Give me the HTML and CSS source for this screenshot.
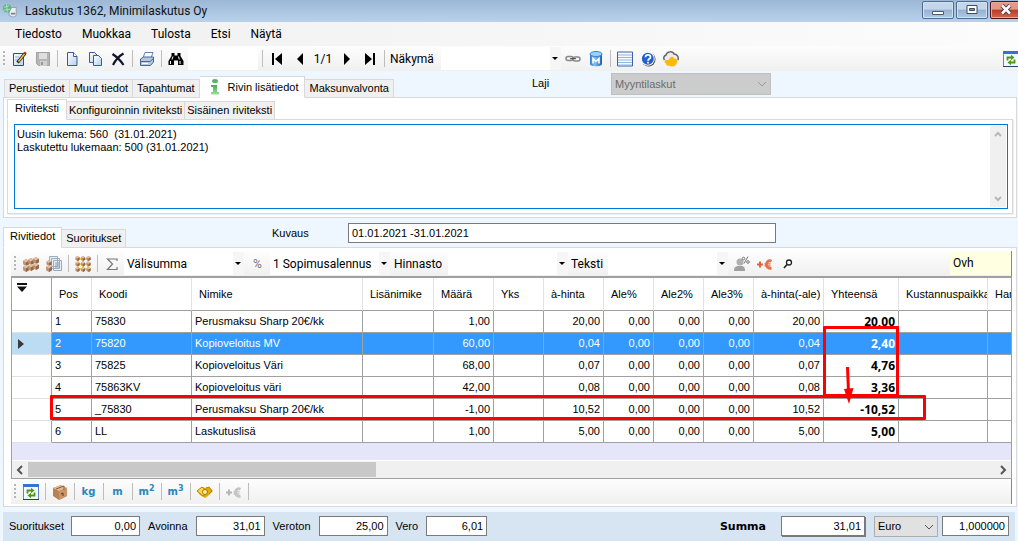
FILE: index.html
```html
<!DOCTYPE html>
<html lang="fi">
<head>
<meta charset="utf-8">
<title>Laskutus 1362, Minimilaskutus Oy</title>
<link rel="stylesheet" href="styles.css">
</head>
<body>
<svg class="defs" aria-hidden="true">
  <defs>
    <linearGradient id="pg" x1="0" y1="0" x2="1" y2="1"><stop offset="0" stop-color="#fff"/><stop offset="1" stop-color="#b5d0ee"/></linearGradient>
    <linearGradient id="db" x1="0" y1="0" x2="1" y2="0"><stop offset="0" stop-color="#2f78d0"/><stop offset=".4" stop-color="#7fc0f5"/><stop offset="1" stop-color="#1e5cb8"/></linearGradient>
    <linearGradient id="gr" x1="0" y1="0" x2="0" y2="1"><stop offset="0" stop-color="#4aa95c"/><stop offset="1" stop-color="#9be09a"/></linearGradient>
    <symbol id="i-refresh" viewBox="0 0 16 16">
      <path d="M.5.5h15v15H.5z" fill="#f4f8ff" stroke="#5f86c8"/><path d="M0 0h16v3H0z" fill="#3a6fd8"/><path d="M0 15h16v1H0z" fill="#26406e"/>
      <path d="M4.500 9.500V6.500H8M11.500 8.500v3H8" fill="none" stroke="#4f9a10" stroke-width="1.800"/><path d="M8 3.800l3.500 2.700L8 9.200zM8 8.800v5.400l-3.500-2.700z" fill="#4f9a10"/>
    </symbol>
    <symbol id="brick" viewBox="0 0 5 6"><path d="M0 1.500 2.500 0 5 1.500v3L2.500 6 0 4.500z" fill="#bd9070"/><path d="M0 1.500 2.500 0 5 1.500 2.500 3z" fill="#e3bfa4"/><path d="M2.500 3v3L5 4.500v-3z" fill="#93664a"/></symbol>
  </defs>
</svg>
<div class="window">
  <header class="titlebar">
    <svg class="logo" viewBox="0 0 18 18"><path d="M8 5h8v9l-3 2-5-2z" fill="#e9eef2" stroke="#8d9aa5"/><path d="M10 12h5" stroke="#7b8790" stroke-width="2"/><path d="M1 4l3-3 5 1 2 4-3 5-5-1-2-3z" fill="#5fb486"/><path d="M2 5l6-2M2 8l7-1M5 1l1 9" stroke="#b7e3c9"/></svg>
    <h1 class="title">Laskutus 1362, Minimilaskutus Oy</h1>
    <div class="winbtns">
      <button class="winbtn" aria-label="Pienennä"><svg viewBox="0 0 12 12"><path d="M.5 7.500h11v3H.5z" fill="#fff" stroke="#4c5a6c"/></svg></button>
      <button class="winbtn" aria-label="Suurenna"><svg viewBox="0 0 12 12"><path d="M1 1.500h10v8H1z" fill="#fff" stroke="#3f4d60"/><path d="M3.500 4.500h5v2h-5z" fill="#7d98bb" stroke="#3f4d60"/></svg></button>
      <button class="winbtn close" aria-label="Sulje"><svg viewBox="0 0 12 12"><path d="M2 1.500l8 8M10 1.500l-8 8" stroke="#463c46" stroke-width="4.500"/><path d="M2 1.500l8 8M10 1.500l-8 8" stroke="#fff" stroke-width="2.500"/></svg></button>
    </div>
  </header>
  <nav class="menubar">
    <button>Tiedosto</button><button>Muokkaa</button><button>Tulosta</button><button>Etsi</button><button>Näytä</button>
  </nav>
  <div class="toolbar main-tools">
    <i class="grip"></i>
    <button class="tb" aria-label="Muokkaa riviä"><svg viewBox="0 0 16 16"><path d="M1.500 2.500h10v12h-10z" fill="url(#pg)" stroke="#2c4f84"/><path d="M3 6h4M3 9h3" stroke="#8fb0d8"/><path d="M5.500 11.500l7.500-9" stroke="#222" stroke-width="3"/><path d="M6.500 10.500l6-7.500" stroke="#f5c43a" stroke-width="1.500"/><path d="M12.500 3l1.300-1.700" stroke="#a33" stroke-width="2.500"/></svg></button>
    <button class="tb" aria-label="Tallenna"><svg viewBox="0 0 16 16"><path d="M1.500 1.500h13v13h-11l-2-2z" fill="#b5b5b5" stroke="#a0a0a0"/><path d="M4 2h8v6H4z" fill="#dedede"/><path d="M5 10h7v5H5z" fill="#d0d0d0"/><path d="M6 11h2v3H6z" fill="#999"/></svg></button>
    <i class="sep"></i>
    <button class="tb" aria-label="Uusi"><svg viewBox="0 0 16 16"><path d="M3.500 1.500h6l3.500 4v9H3.500z" fill="url(#pg)" stroke="#3a5c95"/><path d="M9.500 1.500V5.500H13" fill="#fff" stroke="#3a5c95"/></svg></button>
    <button class="tb" aria-label="Kopioi"><svg viewBox="0 0 16 16"><path d="M2.500 1.500h5l3 3v7h-8z" fill="url(#pg)" stroke="#3a5c95"/><path d="M6.500 4.500h5l3 3v7h-8z" fill="url(#pg)" stroke="#3a5c95"/></svg></button>
    <button class="tb" aria-label="Poista"><svg viewBox="0 0 16 16"><path d="M2.500 3C7 6 11 10 13.500 14M13.500 2.500C9 5 5 10 3 14" fill="none" stroke="#13132c" stroke-width="2.200"/></svg></button>
    <i class="sep"></i>
    <button class="tb" aria-label="Tulosta"><svg viewBox="0 0 16 16"><path d="M6 1.500h8L12 7H4z" fill="#fff" stroke="#6282ad"/><path d="M1.500 8l3-2h10v5l-3 3.500h-10z" fill="#b6c8df" stroke="#4a6790"/><path d="M2 10.500h9l3.500-3" fill="none" stroke="#4a6790"/><path d="M3 12.500h6" stroke="#fff"/></svg></button>
    <i class="sep"></i>
    <button class="tb" aria-label="Etsi"><svg viewBox="0 0 16 16"><path d="M3.500 2h3v2.500h3V2h3v3l3 5v4h-5.500V9.500H6V14H.5v-4l3-5z" fill="#000"/><path d="M2.500 10v3M5 5.500L4 8.500M12 10v3M10.500 5.500l.8 3" stroke="#fff"/></svg></button>
    <input class="quick" aria-label="Hakuteksti">
    <i class="sep"></i>
    <button class="tb" aria-label="Ensimmäinen"><svg viewBox="0 0 16 16"><path d="M3 2h2v12H3zM13 2v12L6 8z" fill="#000"/></svg></button>
    <button class="tb" aria-label="Edellinen"><svg viewBox="0 0 16 16"><path d="M11 2v12L5 8z" fill="#000"/></svg></button>
    <span class="pager">1/1</span>
    <button class="tb" aria-label="Seuraava"><svg viewBox="0 0 16 16"><path d="M5 2v12l6-6z" fill="#000"/></svg></button>
    <button class="tb" aria-label="Viimeinen"><svg viewBox="0 0 16 16"><path d="M3 2v12l7-6zM11 2h2v12h-2z" fill="#000"/></svg></button>
    <i class="sep"></i>
    <label class="tlabel view-label" for="view">Näkymä</label>
    <span class="combo"><select id="view"><option></option></select></span>
    <button class="tb" aria-label="Linkki"><svg viewBox="0 0 16 16"><rect x="1" y="5.500" width="7" height="4" rx="2" fill="none" stroke="#888" stroke-width="1.500"/><rect x="8" y="6" width="7" height="4" rx="2" fill="none" stroke="#888" stroke-width="1.500"/><path d="M5 7.700h6" stroke="#444"/></svg></button>
    <button class="tb" aria-label="Tietokanta"><svg viewBox="0 0 16 16"><path d="M2 3v10c0 3 12 3 12 0V3z" fill="url(#db)"/><ellipse cx="8" cy="3" rx="6" ry="2.500" fill="#9ad4fa" stroke="#3c82cf"/><path d="M5 12.500V7.500l3 3 3-3v5" fill="none" stroke="#fff" stroke-width="1.600"/></svg></button>
    <i class="sep"></i>
    <button class="tb" aria-label="Luettelo"><svg viewBox="0 0 16 16"><path d="M.5 1h15v14H.5z" fill="#f8fbff" stroke="#3c63a5"/><path d="M1 4h14M1 6.500h14M1 9h14M1 11.500h14M1 14h14" stroke="#8fb4e6"/></svg></button>
    <button class="tb" aria-label="Ohje"><svg viewBox="0 0 16 16"><circle cx="8.500" cy="8.500" r="7" fill="#444"/><circle cx="7.800" cy="7.800" r="7" fill="#fff"/><circle cx="7.800" cy="7.800" r="6" fill="#2460cc"/><path d="M5.500 6.200c0-3 5-3 5 0 0 1.600-2.500 1.600-2.500 3.500M8 10.800v1.700" fill="none" stroke="#fff" stroke-width="1.700"/></svg></button>
    <button class="tb" aria-label="Pilvi"><svg viewBox="0 0 16 16"><path d="M1.500 9C0 7 1 5 3 4c1-4 7-4 8-1 3 0 5 3 4 6" fill="#ececec" stroke="#666" stroke-width="1.500"/><path d="M2 9.500c1-1 3 0 4-1 1-3 4-4 5-1 3 0 4 2 3 4-1 4-5 5-8 3-2 1-3-1-3-2-1 0-2-2-1-3z" fill="#fbb90c"/></svg></button>
    <button class="tb edge" aria-label="Päivitä"><svg><use href="#i-refresh"/></svg></button>
  </div>

  <main class="body">
    <div class="tabrow">
      <div class="tabs top-tabs" role="tablist">
        <button class="tab" role="tab">Perustiedot</button><button class="tab" role="tab">Muut tiedot</button><button class="tab" role="tab">Tapahtumat</button><button class="tab active with-icon" role="tab" aria-selected="true"><svg viewBox="0 0 10 16"><ellipse cx="5" cy="2" rx="3" ry="2" fill="#58b368"/><path d="M1 6h6v7h2v2.500H1V13h2V8H1z" fill="url(#gr)"/></svg>Rivin lisätiedot</button><button class="tab" role="tab">Maksunvalvonta</button>
      </div>
      <label class="kind-label" for="kind">Laji</label>
      <span class="winselect kind"><select id="kind" disabled><option>Myyntilaskut</option></select><svg viewBox="0 0 10 6"><path d="M1 1l4 4 4-4"/></svg></span>
    </div>
    <section class="panel outer">
      <div class="tabs inner-tabs" role="tablist">
        <button class="tab active" role="tab" aria-selected="true">Riviteksti</button><button class="tab" role="tab">Konfiguroinnin riviteksti</button><button class="tab" role="tab">Sisäinen riviteksti</button>
      </div>
      <div class="panel inner">
        <div class="memo">
          <textarea aria-label="Riviteksti">Uusin lukema: 560  (31.01.2021)
Laskutettu lukemaan: 500 (31.01.2021)</textarea>
          <div class="vscroll"><svg viewBox="0 0 8 6"><path d="M1 5l3-3 3 3"/></svg><svg viewBox="0 0 8 6"><path d="M1 1l3 3 3-3"/></svg></div>
        </div>
      </div>
    </section>

    <div class="tabrow row-tabs">
      <div class="tabs" role="tablist">
        <button class="tab active" role="tab" aria-selected="true">Rivitiedot</button><button class="tab" role="tab">Suoritukset</button>
      </div>
      <label class="desc-label" for="desc">Kuvaus</label>
      <input class="field desc" id="desc" value="01.01.2021 -31.01.2021">
    </div>
    <section class="panel rows">
      <div class="toolbar row-tools">
        <i class="grip"></i>
        <button class="tb" aria-label="Tuotteet"><svg viewBox="0 0 16 16"><use href="#brick" x="0" y="3" width="6" height="7"/><use href="#brick" x="5" y="2" width="6" height="7"/><use href="#brick" x="10" y="1" width="6" height="7"/><use href="#brick" x="0" y="9" width="6" height="7"/><use href="#brick" x="5" y="8" width="6" height="7"/><use href="#brick" x="10" y="7" width="6" height="7"/></svg></button>
        <button class="tb" aria-label="Rakenne"><svg viewBox="0 0 16 16"><path d="M3.500.5h8v10h-8zM5.500 2.500h8v10h-8zM7.500 4.500h8v10h-8z" fill="#e8eef5" stroke="#9aacc0"/><path d="M9 7h5M9 9h5M9 11h5" stroke="#8aa0bb"/><use href="#brick" x="0" y="4" width="6" height="6"/><use href="#brick" x="0" y="9" width="6" height="7"/></svg></button>
        <i class="sep"></i>
        <button class="tb" aria-label="Ryhmät"><svg viewBox="0 0 16 16"><path d="M3 3h10v10H3zM3 8h10M8 3v10" fill="none" stroke="#f0c420" stroke-width="1.500"/><use href="#brick" x="0" y="0" width="5" height="5"/><use href="#brick" x="5.500" y="0" width="5" height="5"/><use href="#brick" x="11" y="0" width="5" height="5"/><use href="#brick" x="0" y="5.500" width="5" height="5"/><use href="#brick" x="5.500" y="5.500" width="5" height="5"/><use href="#brick" x="11" y="5.500" width="5" height="5"/><use href="#brick" x="0" y="11" width="5" height="5"/><use href="#brick" x="5.500" y="11" width="5" height="5"/><use href="#brick" x="11" y="11" width="5" height="5"/></svg></button>
        <i class="sep"></i>
        <button class="tb" aria-label="Summa"><svg viewBox="0 0 16 16"><path d="M13 5V3H3.500l5 5-5 5.500H13V11" fill="none" stroke="#777" stroke-width="1.200"/></svg></button>
        <span class="combo"><select aria-label="Summatyyppi"><option>Välisumma</option></select></span>
        <button class="tb pct" aria-label="Alennusprosentti">%</button>
        <span class="combo"><select aria-label="Alennus"><option>1 Sopimusalennus</option></select></span>
        <label class="tlabel price-label" for="pricelist">Hinnasto</label>
        <span class="combo"><select id="pricelist"><option></option></select></span>
        <label class="tlabel text-label" for="text">Teksti</label>
        <span class="combo"><select id="text"><option></option></select></span>
        <button class="tb" aria-label="Asiakasalennus"><svg viewBox="0 0 16 16"><circle cx="6" cy="6" r="3.500" fill="#b0b0b0"/><path d="M0 15c0-5 3-5 6-5s5 0 5 5z" fill="#a0a0a0"/><circle cx="9.500" cy="2.500" r="1.300" fill="none" stroke="#777"/><circle cx="14" cy="6" r="1.300" fill="none" stroke="#777"/><path d="M10 7.500l4-7" stroke="#777"/></svg></button>
        <button class="tb" aria-label="Lisää hinta"><svg viewBox="0 0 16 16"><path d="M0 8.500h6M3 5.500v6" stroke="#dd6240" stroke-width="2"/><path d="M14.500 5.200c-6-3-7.500 8.600 0 7" fill="none" stroke="#e2714e" stroke-width="2.800"/><path d="M7.500 7.800h6M7.500 9.800h6" stroke="#e2714e" stroke-width="1.200"/></svg></button>
        <button class="tb" aria-label="Hae"><svg viewBox="0 0 16 16"><circle cx="9" cy="6.500" r="2.500" fill="#fff" stroke="#222" stroke-width="1.300"/><path d="M7 8.500L4 12" stroke="#222" stroke-width="1.600"/></svg></button>
        <span class="ovh">Ovh</span>
      </div>

      <div class="grid">
        <div class="grid-clip">
        <table>
          <colgroup><col class="w40"><col class="w40"><col class="w100"><col class="w171"><col class="w71"><col class="w60"><col class="w50"><col class="w60"><col class="w50"><col class="w50"><col class="w50"><col class="w70"><col class="w75"><col class="w89"><col class="w71"></colgroup>
          <thead><tr><th class="pick"><svg viewBox="0 0 10 9"><path d="M0 0h10v2H0zM0 3.500h10L5 9z" fill="#111"/></svg></th><th>Pos</th><th>Koodi</th><th>Nimike</th><th>Lisänimike</th><th>Määrä</th><th>Yks</th><th>à-hinta</th><th>Ale%</th><th>Ale2%</th><th>Ale3%</th><th>à-hinta(-ale)</th><th>Yhteensä</th><th>Kustannuspaikka</th><th>Hankinta</th></tr></thead>
          <tbody>
            <tr><td></td><td>1</td><td>75830</td><td>Perusmaksu Sharp 20€/kk</td><td></td><td class="n">1,00</td><td></td><td class="n">20,00</td><td class="n">0,00</td><td class="n">0,00</td><td class="n">0,00</td><td class="n">20,00</td><td class="n total">20,00</td><td></td><td></td></tr>
            <tr class="sel"><td class="cur"><svg viewBox="0 0 6 10"><path d="M0 0l6 5-6 5z" fill="#3a3a3a"/></svg></td><td>2</td><td>75820</td><td>Kopioveloitus MV</td><td></td><td class="n">60,00</td><td></td><td class="n">0,04</td><td class="n">0,00</td><td class="n">0,00</td><td class="n">0,00</td><td class="n">0,04</td><td class="n total">2,40</td><td></td><td></td></tr>
            <tr><td></td><td>3</td><td>75825</td><td>Kopioveloitus Väri</td><td></td><td class="n">68,00</td><td></td><td class="n">0,07</td><td class="n">0,00</td><td class="n">0,00</td><td class="n">0,00</td><td class="n">0,07</td><td class="n total">4,76</td><td></td><td></td></tr>
            <tr><td></td><td>4</td><td>75863KV</td><td>Kopioveloitus väri</td><td></td><td class="n">42,00</td><td></td><td class="n">0,08</td><td class="n">0,00</td><td class="n">0,00</td><td class="n">0,00</td><td class="n">0,08</td><td class="n total">3,36</td><td></td><td></td></tr>
            <tr><td></td><td>5</td><td>_75830</td><td>Perusmaksu Sharp 20€/kk</td><td></td><td class="n">-1,00</td><td></td><td class="n">10,52</td><td class="n">0,00</td><td class="n">0,00</td><td class="n">0,00</td><td class="n">10,52</td><td class="n total">-10,52</td><td></td><td></td></tr>
            <tr><td></td><td>6</td><td>LL</td><td>Laskutuslisä</td><td></td><td class="n">1,00</td><td></td><td class="n">5,00</td><td class="n">0,00</td><td class="n">0,00</td><td class="n">0,00</td><td class="n">5,00</td><td class="n total">5,00</td><td></td><td></td></tr>
          </tbody>
        </table>
        </div>
        <div class="hscroll"><svg viewBox="0 0 8 10"><path d="M6 1L2 5l4 4"/></svg><div class="track"><div class="thumb"></div></div><svg viewBox="0 0 8 10"><path d="M2 1l4 4-4 4"/></svg></div>
        <div class="mark mark-sum"></div>
        <div class="mark mark-row"></div>
        <svg class="arrow" viewBox="0 0 12 38"><path d="M4.500 1L5.500 26" stroke="#f00" stroke-width="3"/><path d="M1 23l9.500-1L6 38z" fill="#f00"/></svg>
      </div>

      <div class="toolbar unit-tools">
        <i class="grip"></i>
        <button class="tb" aria-label="Päivitä rivit"><svg><use href="#i-refresh"/></svg></button><i class="sep"></i>
        <button class="tb" aria-label="Pakkaus"><svg viewBox="0 0 16 16"><path d="M1 4l8-3 6 3v8l-8 4-6-4z" fill="#b98055"/><path d="M1 4l8-3 6 3-8 3z" fill="#e2b98e"/><path d="M7 7v9l8-4V4z" fill="#c99568"/><path d="M4 5l8-3v4" fill="none" stroke="#8a5a38"/><path d="M9 10l2-1v3" stroke="#5c3a22" fill="none"/></svg></button><i class="sep"></i>
        <button class="tb unit"><span>kg</span></button><i class="sep"></i>
        <button class="tb unit"><span>m</span></button><i class="sep"></i>
        <button class="tb unit"><span>m<sup>2</sup></span></button><i class="sep"></i>
        <button class="tb unit"><span>m<sup>3</sup></span></button><i class="sep"></i>
        <button class="tb" aria-label="Rahat"><svg viewBox="0 0 16 16"><path d="M0 7l5-4 4 1 3-1 4 4-5 5-3 2-5-3z" fill="#e2a90c"/><path d="M0 7l5-4 6 5-5 4z" fill="#ffd84a" stroke="#b78203"/><circle cx="8" cy="8" r="2.500" fill="#fff1a8" stroke="#a77500"/><path d="M9 4l3-1 3 4-3 3" fill="none" stroke="#b78203"/></svg></button><i class="sep"></i>
        <button class="tb" aria-label="Lisää euro" disabled><svg viewBox="0 0 16 16"><path d="M0 8.500h6M3 5.500v6" stroke="#b5b5b5" stroke-width="2"/><path d="M14.500 5.200c-6-3-7.500 8.600 0 7" fill="none" stroke="#c4c4c4" stroke-width="2.800"/><path d="M7.500 7.800h6M7.500 9.800h6" stroke="#c4c4c4" stroke-width="1.200"/></svg></button><i class="sep"></i>
      </div>
    </section>
  </main>

  <footer class="totals">
    <label for="paid">Suoritukset</label><input class="field w-69" id="paid" value="0,00">
    <label for="open">Avoinna</label><input class="field w-69" id="open" value="31,01">
    <label for="net">Veroton</label><input class="field w-69" id="net" value="25,00">
    <label for="tax">Vero</label><input class="field w-61" id="tax" value="6,01">
    <label class="sum" for="sum">Summa</label><input class="field raised" id="sum" value="31,01">
    <span class="winselect cur-select"><select aria-label="Valuutta"><option>Euro</option></select><svg viewBox="0 0 10 6"><path d="M1 1l4 4 4-4"/></svg></span>
    <input class="field w-67" aria-label="Kurssi" value="1,000000">
  </footer>
</div>
</body>
</html>
```
FILE: styles.css
```css
* { box-sizing: border-box; }
body { margin: 0; font: 11px/13px "Liberation Sans", Arial, sans-serif; color: #000; background: #eef7ff; }
button, input, select, textarea { font: inherit; color: inherit; margin: 0; padding: 0; border: 0; background: none; border-radius: 0; outline: 0; }
select { appearance: none; }
.defs { position: absolute; width: 0; height: 0; }
.window { min-height: 100vh; display: flex; flex-direction: column; overflow: hidden; }

.titlebar { height: 22px; display: flex; align-items: center; padding-left: 2px; background: linear-gradient(#9cb8d5, #b9d1eb); }
.logo { width: 16px; height: 18px; }
.title { flex: 1; margin: 0 0 0 7px; font: 12px/20px Roboto, sans-serif; color: #111; }
.winbtns { display: flex; gap: 2px; margin-right: -4px; align-self: flex-start; padding-top: 1px; }
.winbtn { width: 32px; height: 18px; display: grid; place-items: center; border: 1px solid #4f6b8e; border-radius: 2px; background: linear-gradient(#c3d6ea 0 45%, #96b1d0 50%, #b0cae4); box-shadow: inset 0 0 0 1px #d4e3f2; }
.winbtn svg { width: 12px; height: 12px; }
.winbtn.close { border-color: #4a1620; background: linear-gradient(#e2988b 0 45%, #bd3c25 50%, #d0684f); box-shadow: inset 0 0 0 1px #e8a99c; }

.menubar { height: 24px; display: flex; gap: 20px; padding-left: 15px; background: linear-gradient(90deg, #f0f0f0, #fcfcfc); font: 12px/23px Roboto, sans-serif; }

.toolbar { height: 25px; display: flex; align-items: center; background: linear-gradient(#fdfdfd, #f0f0f0); font: 12px/16px Roboto, sans-serif; }
.toolbar > * { flex: none; }
.grip { width: 2px; height: 15px; margin: 0 3px; background: repeating-linear-gradient(#b5b5b5 0 2px, transparent 2px 4px); }
.tb { width: 23px; height: 23px; display: grid; place-items: center; }
.tb svg { width: 16px; height: 16px; display: block; }
.sep { width: 1px; height: 17px; margin: 0 2px 0 3px; background: #bdbdbd; }
.quick { width: 70px; height: 23px; margin: 0 1px; background: #fff; }
.pager { width: 24px; text-align: center; }
.tlabel { padding-left: 3px; }
.view-label { width: 54px; }
.combo { position: relative; width: 120px; height: 23px; background: linear-gradient(90deg, #fff 109px, #f6f6f6 109px); }
.combo select { width: 100%; height: 23px; padding-left: 3px; }
.combo::after { content: ""; position: absolute; right: 3px; top: 10px; border: 3px solid transparent; border-top-color: #000; border-bottom: 0; pointer-events: none; }
.edge { margin-left: auto; margin-right: -4px; }

.body { padding: 5px 1px 5px 3px; }
.tabrow { display: flex; }
.tabs { display: flex; align-items: flex-end; position: relative; margin-bottom: -1px; z-index: 1; }
.tab { height: 19px; padding: 0 4px; border: 1px solid #d9d9d9; border-left-width: 0; background: #f0f0f0; white-space: nowrap; }
.tab:first-child { border-left-width: 1px; }
.tab.active { height: 22px; padding-bottom: 3px; background: #fff; border-bottom-color: #fff; }
.top-tabs { padding-left: 1px; width: 529px; }
.tab.with-icon { display: flex; align-items: center; gap: 8px; padding: 0 6px 0 10px; }
.with-icon svg { width: 10px; height: 16px; }
.kind-label { width: 79px; margin-top: 1px; }
.kind { width: 160px; margin-top: -3px; }
.winselect { position: relative; height: 22px; flex: none; }
.winselect select { width: 100%; height: 100%; padding-left: 3px; border: 1px solid #adadad; background: #e1e1e1; }
.winselect svg { position: absolute; right: 4px; top: 8px; width: 10px; height: 6px; pointer-events: none; }
.winselect path { fill: none; stroke: #555; }
.winselect select:disabled { background: #ccc; border-color: #bfbfbf; color: #6d6d6d; opacity: 1; }
.winselect select:disabled + svg path { stroke: #999; }

.panel { border: 1px solid #d9d9d9; background: #fff; }
.outer { padding: 1px 3px 3px; }
.inner { padding: 4px 4px 4px 6px; box-shadow: 1px 1px 0 #eee; }
.inner-tabs .tab { height: 19px; padding: 0 2px; }
.inner-tabs .tab.active { height: 21px; padding: 0 7px 2px; }
.memo { display: flex; height: 85px; padding: 1px; border: 1px solid #0078d7; }
.memo textarea { flex: 1; padding: 2px 1px; resize: none; overflow: hidden; display: block; }
.vscroll { width: 16px; display: flex; flex-direction: column; justify-content: space-between; align-items: center; padding: 5px 0; background: #f0f0f0; }
.vscroll svg { width: 8px; height: 6px; }
.vscroll path { fill: none; stroke: #b8b8b8; stroke-width: 2; }

.row-tabs { height: 29px; align-items: flex-end; }
.row-tabs .tabs { width: 269px; }
.row-tabs .tab { height: 19px; }
.row-tabs .tab.active { height: 21px; padding: 0 6px 2px; }
.desc-label { margin-bottom: 7px; width: 76px; }
.field { height: 20px; padding: 0 3px; border: 1px solid #7a7a7a; background: #fff; }
.desc { width: 428px; margin-bottom: 4px; }

.rows { padding: 3px 4px 2px 7px; }
.row-tools { border-right: 1px solid #888; }
.pct { color: #777; }
.price-label { width: 57px; padding-left: 4px; }
.text-label { width: 39px; }
.row-tools .combo { margin-left: 1px; }
.row-tools .combo + .tb { margin-left: 2px; }
.ovh { width: 61px; height: 23px; margin-left: auto; padding: 3px; background: #ffffe1; }

.grid { position: relative; border: 1px solid #a0a0a0; border-top-width: 2px; background: #e6e6fa; }
.grid-clip { overflow: hidden; background: #e6e6fa; padding-bottom: 17px; }
table { width: 1047px; table-layout: fixed; border-collapse: separate; border-spacing: 0; background: #fff; }
.w40 { width: 40px; } .w50 { width: 50px; } .w60 { width: 60px; } .w70 { width: 70px; } .w71 { width: 71px; } .w75 { width: 75px; } .w89 { width: 89px; } .w100 { width: 100px; } .w171 { width: 171px; }
th { height: 33px; padding: 0 0 0 7px; font-weight: 400; text-align: left; white-space: nowrap; overflow: hidden; border-right: 1px solid #e2e2e2; border-bottom: 1px solid #a0a0a0; }
.pick { padding: 5px 0 0 5px; vertical-align: top; border-right-color: #a0a0a0; }
.pick svg { width: 10px; height: 9px; display: block; }
td { height: 22px; padding: 0 3px; white-space: nowrap; overflow: hidden; border-right: 1px solid #a0a0a0; border-bottom: 1px solid #a0a0a0; }
td:first-child { border-bottom-color: #e2e2e2; }
.n { text-align: right; }
.total { font: bold 12px/16px "Open Sans", sans-serif; }
.sel td { background: #3399ff; color: #fff; }
.sel .cur { background: #bcdcf4; padding-left: 6px; }
.cur svg { width: 6px; height: 10px; display: block; }
.hscroll { display: flex; align-items: center; height: 18px; border-top: 1px solid #fff; background: #f0f0f0; }
.hscroll svg { width: 8px; height: 10px; margin: 0 4px; }
.hscroll path { fill: none; stroke: #555; stroke-width: 2; }
.track { flex: 1; }
.thumb { width: 36%; height: 15px; background: #c8c8c8; }
.mark { position: absolute; border: 3px solid #f00; border-radius: 1px; pointer-events: none; }
.mark-sum { left: 811px; top: 48px; width: 76px; height: 71px; }
.mark-row { left: 38px; top: 117px; width: 876px; height: 25px; }
.arrow { position: absolute; left: 831px; top: 88px; width: 12px; height: 38px; }

.unit-tools { border-right: 1px solid #888; }
.unit { color: #2a86bd; font: bold 10px/14px "DejaVu Sans", sans-serif; }
.unit sup { font-size: 8px; line-height: 0; }

.totals { flex: 1; display: flex; align-items: flex-start; margin: 0 3px; padding: 4px 6px; min-height: 28px; background: #d7e4f2; }
.totals label { padding-top: 4px; margin: 0 8px; white-space: nowrap; }
.totals label:first-child { margin: 0 7px 0 0; }
.totals .field { text-align: right; }
.w-69 { width: 69px; } .w-61 { width: 61px; } .w-67 { width: 67px; }
.totals .sum { margin-left: auto; margin-right: 15px; font: bold 11px/13px "DejaVu Sans", sans-serif; }
.raised { width: 84px; box-shadow: 1px 1px 0 #7a7a7a; }
.cur-select { width: 64px; height: 21px; margin: 0 4px 0 9px; }
```
